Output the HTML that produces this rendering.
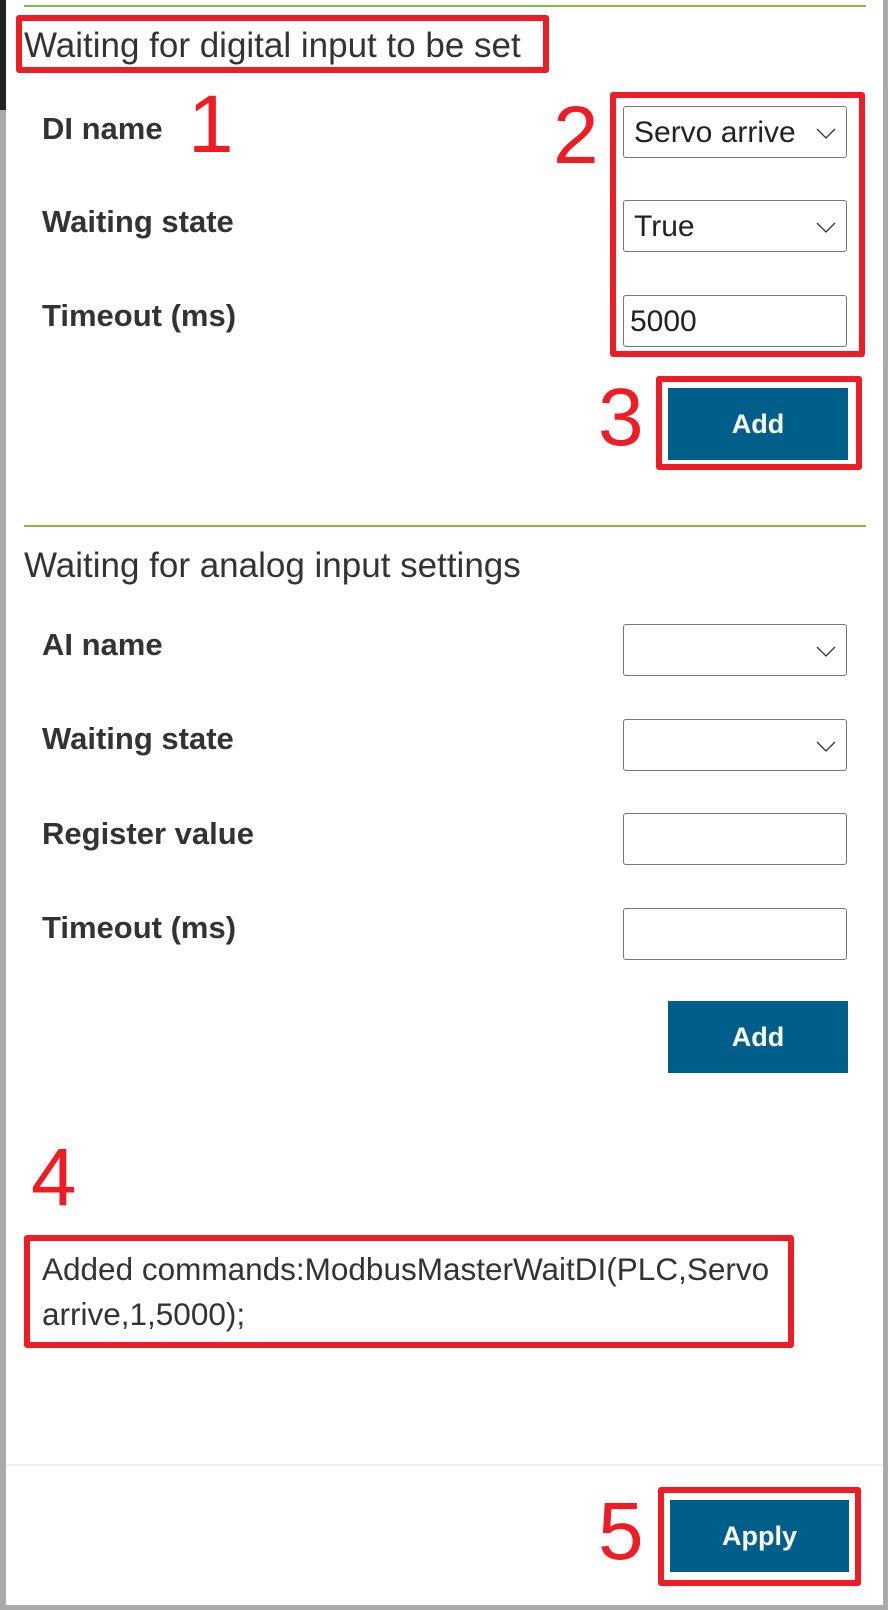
<!DOCTYPE html>
<html><head><style>
*{margin:0;padding:0;box-sizing:border-box}
body{width:888px;height:1610px;background:#aaa;position:relative;overflow:hidden;font-family:"Liberation Sans",sans-serif;color:#333}
.a{position:absolute;line-height:1;white-space:nowrap}
.panel{left:6px;top:0;width:877px;height:1605px;background:#fff}
.g{height:2px;background:#8bbf3a;left:24px;width:842px}
.t{font-size:35px;font-weight:300;color:#333;left:24px}
.l{font-size:31px;font-weight:bold;left:42px;color:#333}
.f{left:623px;width:224px;height:52px;border:1px solid #777;border-radius:3px;font-size:30px;padding:11px 0 0 10px;color:#222}
.f svg{position:absolute;right:10px;top:21px}
.btn{left:668px;width:180px;height:72px;background:#005f8a;color:#fff;font-weight:bold;font-size:27px;text-align:center;line-height:72px}
.r{border:6px solid #ee1c25;border-radius:3px}
.n{color:#ee1c25;font-size:82px;font-weight:300;line-height:1}
</style></head><body>
<div class="a" style="left:0;top:0;width:6px;height:110px;background:#222"></div>
<div class="a panel"></div>
<div class="a g" style="top:5px"></div>
<div class="a t" style="top:28px">Waiting for digital input to be set</div>
<div class="a r" style="left:16px;top:15px;width:533px;height:58px"></div>
<div class="a l" style="top:113px">DI name</div>
<div class="a l" style="top:206px">Waiting state</div>
<div class="a l" style="top:300px">Timeout (ms)</div>
<div class="a n" style="left:188px;top:84px">1</div>
<div class="a n" style="left:553px;top:95px">2</div>
<div class="a n" style="left:598px;top:377px">3</div>
<div class="a f" style="top:106px">Servo arrive<svg width="20" height="11"><path d="M1 1L10 10L19 1" fill="none" stroke="#333" stroke-width="1.3"/></svg></div>
<div class="a f" style="top:200px">True<svg width="20" height="11"><path d="M1 1L10 10L19 1" fill="none" stroke="#333" stroke-width="1.3"/></svg></div>
<div class="a f" style="top:295px;padding-left:6px">5000</div>
<div class="a r" style="left:610px;top:92px;width:255px;height:265px"></div>
<div class="a btn" style="top:388px">Add</div>
<div class="a r" style="left:656px;top:376px;width:206px;height:94px"></div>
<div class="a g" style="top:525px"></div>
<div class="a t" style="top:548px">Waiting for analog input settings</div>
<div class="a l" style="top:629px">AI name</div>
<div class="a l" style="top:723px">Waiting state</div>
<div class="a l" style="top:818px">Register value</div>
<div class="a l" style="top:912px">Timeout (ms)</div>
<div class="a f" style="top:624px"><svg width="20" height="11"><path d="M1 1L10 10L19 1" fill="none" stroke="#333" stroke-width="1.3"/></svg></div>
<div class="a f" style="top:719px"><svg width="20" height="11"><path d="M1 1L10 10L19 1" fill="none" stroke="#333" stroke-width="1.3"/></svg></div>
<div class="a f" style="top:813px"></div>
<div class="a f" style="top:908px"></div>
<div class="a btn" style="top:1001px">Add</div>
<div class="a n" style="left:31px;top:1137px">4</div>
<div class="a r" style="left:24px;top:1235px;width:770px;height:113px"></div>
<div class="a" style="left:42px;top:1247px;font-size:31.5px;line-height:45px;color:#333">Added commands:ModbusMasterWaitDI(PLC,Servo<br>arrive,1,5000);</div>
<div class="a" style="left:6px;top:1464px;width:877px;height:2px;background:#f0f0f0"></div>
<div class="a n" style="left:598px;top:1491px">5</div>
<div class="a btn" style="top:1500px;left:670px;width:179px">Apply</div>
<div class="a r" style="left:658px;top:1487px;width:203px;height:99px"></div>
</body></html>
